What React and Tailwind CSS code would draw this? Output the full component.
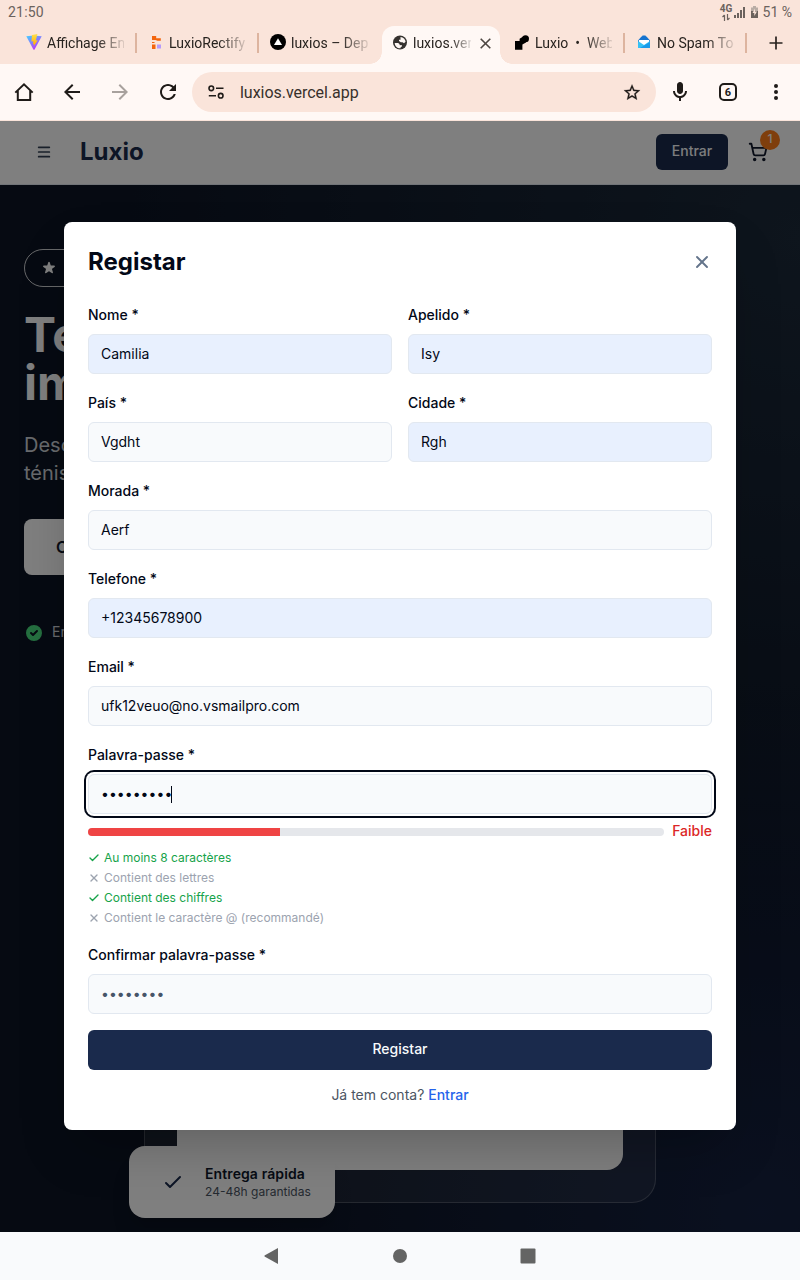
import { Check, Menu, ShoppingCart, X } from "lucide-react";

function ViteIcon() {
  return (
    <svg className="h-4 w-4" viewBox="0 0 16 16">
      <defs>
        <linearGradient id="viteA" x1="0" y1="0" x2="0.6" y2="1">
          <stop offset="0" stopColor="#41d1ff" />
          <stop offset="1" stopColor="#bd34fe" />
        </linearGradient>
        <linearGradient id="viteB" x1="0" y1="0" x2="0" y2="1">
          <stop offset="0" stopColor="#ffe04a" />
          <stop offset="1" stopColor="#ffa800" />
        </linearGradient>
      </defs>
      <path d="M0.3 2.2 L7.8 1.600 L15.7 2.2 L8.6 15.4 Q8 16.2 7.4 15.4Z" fill="url(#viteA)" />
      <path d="M11.4 0 L6 1.1 L5.4 7.6 L7.4 7.2 L6.9 10.2 L8.2 9.9 L7.6 12.6 L11.8 6.2 L9.8 6.5Z" fill="url(#viteB)" />
    </svg>
  );
}

function BlocksIcon() {
  return (
    <svg className="h-4 w-4" viewBox="0 0 16 16">
      <path d="M4 2h4.200v2.200h4.600v2.600H9.500L7.500 6H4z" fill="#f3650d" />
      <path d="M4 10.500h3.500V15H4zM4 8h2.500v1H4z" fill="#f3650d" />
      <path d="M9 10.500h4V14.500H9z" fill="#b59bfb" />
    </svg>
  );
}

function VercelIcon() {
  return (
    <svg className="h-4 w-4" viewBox="0 0 16 16">
      <circle cx="8" cy="8" r="8" fill="#000" />
      <path d="M8 4.300 12 11H4z" fill="#fff" />
    </svg>
  );
}

function GlobeIcon() {
  return (
    <svg className="h-4 w-4" viewBox="0 0 16 16">
      <circle cx="8" cy="8.500" r="7" fill="#35322f" />
      <path d="M2.700 9h3.100c1 0 2 1.100 2 2.300l2-.4v1.400c0 .8-1 1-1.300 1.300v.7C5.400 14.500 2.700 12.100 2.700 9zM8.500 3c2.800.3 4.800 2.200 5.100 4.800l-1.600 1.500-1.500-1.100H8.800L7 7V5.800h1.500z" fill="#fff8f5" />
    </svg>
  );
}

function StampIcon() {
  return (
    <svg className="h-4 w-4" viewBox="0 0 16 16">
      <circle cx="11.500" cy="4.700" r="3.500" fill="#000" />
      <path d="M1 7h4.600V4.700L10 2l2 6.500L8.400 10.500v5.200H1z" fill="#000" />
    </svg>
  );
}

function MailIcon() {
  return (
    <svg className="h-4 w-4" viewBox="0 0 16 16">
      <path d="M2 6.500 5.500 2.500h5L14 6.500V9H2z" fill="#1673cf" />
      <rect x="6" y="1.500" width="4" height="2" rx="1" fill="#1673cf" />
      <path d="M3 6h10v3.500L8 12 3 9.500z" fill="#fff" />
      <path d="M2 7l6 4 6-4v7H2z" fill="#35c1f5" />
      <path d="M14 8v6H4z" fill="#1a9bea" />
    </svg>
  );
}

function TabTitle({ children, className = "" }) {
  return (
    <span
      className={`mt-0.5 block overflow-hidden whitespace-pre text-[14px] leading-5 [mask-image:linear-gradient(to_right,black_65%,transparent_105%)] ${className}`}
    >
      {children}
    </span>
  );
}

function Tab({ icon, title, divider }) {
  return (
    <div className="flex h-full w-[122px] shrink-0 items-center pb-1 pl-3">
      {icon}
      <TabTitle className="ml-[5px] w-[77px]">{title}</TabTitle>
      {divider && <span className="-mr-px ml-auto mt-0.5 h-5 w-[2px] bg-[#ddb49f]" />}
    </div>
  );
}

function StatusBar() {
  return (
    <div className="flex h-6 items-center justify-between pl-2 pr-2 text-[14px] text-[#6b625d]">
      <span className="tracking-[0.2px]">21:50</span>
      <div className="flex items-center">
        <div className="flex w-[13px] flex-col items-center">
          <span className="text-[10px] font-bold leading-[10px]">4G</span>
          <svg className="h-[7px] w-[8px]" viewBox="0 0 8 7" fill="none" stroke="#6b625d" strokeWidth="1.200">
            <path d="M2.500 7V1M0.500 3 2.500 1M5.500 0v6M7.500 4 5.500 6" />
          </svg>
        </div>
        <svg className="ml-px h-[11px] w-[11px]" viewBox="0 0 11 11" fill="#6b625d">
          <path d="M0 8h2v3H0zM3 6h2v5H3zM6 3h2v8H6zM9 0h2v11H9z" />
        </svg>
        <svg className="ml-[6px] h-3 w-[7px]" viewBox="0 0 7 12">
          <path d="M2 0h3v1.500h2V12H0V1.500h2z" fill="#b8aca5" />
          <path d="M0 5h7v7H0z" fill="#6b625d" />
          <path d="M4 2.500 1.500 7H3.300v3L6 5.500H4z" fill="#fae4da" />
        </svg>
        <span className="ml-[5px]">51 %</span>
      </div>
    </div>
  );
}

function TabStrip() {
  return (
    <div className="flex h-10 items-center pl-[14px] text-[#28231f]">
      <Tab icon={<ViteIcon />} title="Affichage Enre" divider />
      <Tab icon={<BlocksIcon />} title="LuxioRectifyi" divider />
      <Tab icon={<VercelIcon />} title="luxios – Deploy" />
      <div className="flex h-full w-[122px] shrink-0 items-end">
        <div className="relative mx-[2px] flex h-[38px] w-[118px] items-center rounded-t-[12px] bg-[#fff8f5] pb-[6px] pl-[10px] pr-[9px]">
          <span className="absolute -left-3 bottom-0 h-3 w-3 bg-[radial-gradient(circle_at_0_0,transparent_11.5px,#fff8f5_12px)]" />
          <span className="absolute -right-3 bottom-0 h-3 w-3 bg-[radial-gradient(circle_at_100%_0,transparent_11.5px,#fff8f5_12px)]" />
          <GlobeIcon />
          <TabTitle className="ml-[5px] w-[58px]">luxios.verce</TabTitle>
          <svg className="ml-auto mt-0.5 h-[11px] w-[11px]" viewBox="0 0 11 11" stroke="#4d4641" strokeWidth="1.600">
            <path d="M0.700 0.700 10.300 10.300M10.300 0.700 0.700 10.300" />
          </svg>
        </div>
      </div>
      <Tab icon={<StampIcon />} title="Luxio  •  Web" divider />
      <Tab icon={<MailIcon />} title="No Spam Tod" divider />
      <svg className="-mt-0.5 ml-[23px] h-[14px] w-[14px]" viewBox="0 0 14 14" stroke="#28231f" strokeWidth="1.700">
        <path d="M7 0.500v13M0.500 7h13" />
      </svg>
    </div>
  );
}

function Toolbar() {
  return (
    <div className="flex h-14 items-center bg-[#fff8f5] text-[#1f1b18]">
      <svg className="ml-3 h-6 w-6" viewBox="0 0 24 24" fill="none" stroke="currentColor" strokeWidth="2">
        <path d="M3.300 12.600 12 4.300l8.700 8.300M5.800 10.500V20h12.400v-9.500" />
      </svg>
      <svg className="ml-6 h-6 w-6" viewBox="0 0 24 24" fill="currentColor">
        <path d="M20 11H7.830l5.590-5.590L12 4l-8 8 8 8 1.410-1.410L7.830 13H20v-2z" />
      </svg>
      <svg className="ml-6 h-6 w-6 text-[#a8a19d]" viewBox="0 0 24 24" fill="currentColor">
        <path d="M12 4l-1.410 1.410L16.170 11H4v2h12.170l-5.580 5.590L12 20l8-8z" />
      </svg>
      <svg className="ml-6 h-6 w-6" viewBox="0 0 24 24" fill="currentColor">
        <path d="M17.650 6.350C16.200 4.900 14.210 4 12 4c-4.420 0-7.990 3.580-7.990 8s3.570 8 7.990 8c3.730 0 6.840-2.550 7.730-6h-2.080c-.82 2.330-3.040 4-5.650 4-3.310 0-6-2.690-6-6s2.690-6 6-6c1.660 0 3.140.69 4.220 1.780L13 11h7V4l-2.350 2.350z" />
      </svg>
      <div className="ml-3 flex h-10 w-[464px] items-center rounded-full bg-[#fae4da] pl-4 pr-3">
        <svg className="h-4 w-4" viewBox="0 0 16 16" fill="none" stroke="currentColor" strokeWidth="1.600">
          <circle cx="3.300" cy="4.300" r="2.300" />
          <circle cx="12.700" cy="11.700" r="2.300" />
          <path d="M8 4.300h7.500M0.800 11.700H8" />
        </svg>
        <span className="ml-4 flex-1 pt-0.5 text-[16px] leading-6 tracking-[-0.03px] text-[#37302b]">luxios.vercel.app</span>
        <svg className="h-6 w-6" viewBox="0 0 24 24" fill="currentColor">
          <g transform="translate(2.300 2.800) scale(.81)">
            <path d="M22 9.240l-7.190-.62L12 2 9.190 8.630 2 9.240l5.460 4.730L5.820 21 12 17.270 18.180 21l-1.630-7.030L22 9.240zM12 15.400l-3.760 2.270 1-4.280-3.320-2.880 4.380-.38L12 6.100l1.710 4.040 4.380.38-3.320 2.880 1 4.280L12 15.400z" stroke="currentColor" strokeWidth=".3" />
          </g>
        </svg>
      </div>
      <svg className="ml-3 h-6 w-6" viewBox="0 0 24 24" fill="currentColor">
        <path d="M12 14c1.660 0 3-1.340 3-3V5c0-1.660-1.340-3-3-3S9 3.340 9 5v6c0 1.660 1.340 3 3 3zm5-3c0 2.760-2.240 5-5 5s-5-2.240-5-5H5c0 3.530 2.610 6.430 6 6.920V21h2v-3.080c3.390-.49 6-3.390 6-6.920h-2z" />
      </svg>
      <div className="ml-[27px] flex h-[18px] w-[18px] items-center justify-center rounded-[5px] border-2 border-current text-[11px] font-bold leading-none">
        6
      </div>
      <svg className="ml-[27px] h-6 w-6" viewBox="0 0 24 24" fill="currentColor">
        <circle cx="12" cy="6" r="2" />
        <circle cx="12" cy="12" r="2" />
        <circle cx="12" cy="18" r="2" />
      </svg>
    </div>
  );
}

function SiteHeader() {
  return (
    <div className="flex h-16 items-center border-b border-slate-200 bg-white pb-[2px] pl-9 pr-8">
      <Menu className="h-4 w-4 text-[#334155]" strokeWidth={2.6} />
      <span className="ml-7 text-2xl font-bold text-[#1a2a4c]">Luxio</span>
      <div className="ml-auto flex h-9 w-[72px] items-center justify-center rounded-md bg-[#1a2a4c] pb-0.5 text-sm font-medium text-slate-50">
        Entrar
      </div>
      <div className="relative ml-5 text-[#0f172a]">
        <ShoppingCart className="h-5 w-5" strokeWidth={2.2} />
        <span className="absolute -right-3 -top-3 flex h-5 w-5 items-center justify-center rounded-full bg-[#ff7d18] pb-px text-xs font-medium text-white">
          1
        </span>
      </div>
    </div>
  );
}

function Hero() {
  return (
    <div className="flex-1 bg-[#0c1424] bg-[radial-gradient(circle_at_100%_5%,#1c2a3a_0%,transparent_55%),radial-gradient(circle_at_95%_98%,#152140_0%,transparent_40%)] px-6 pt-16 text-white">
      <div className="flex h-[38px] w-56 items-center rounded-full border border-white/80 pl-4">
        <svg className="h-4 w-4" viewBox="0 0 20 20" fill="currentColor">
          <path d="M9.049 2.927c.3-.921 1.603-.921 1.902 0l1.070 3.292a1 1 0 00.95.69h3.462c.969 0 1.371 1.240.588 1.810l-2.800 2.034a1 1 0 00-.364 1.118l1.070 3.292c.3.921-.755 1.688-1.540 1.118l-2.800-2.034a1 1 0 00-1.175 0l-2.800 2.034c-.784.57-1.838-.197-1.539-1.118l1.070-3.292a1 1 0 00-.364-1.118L2.980 8.720c-.783-.57-.38-1.810.588-1.810h3.461a1 1 0 00.951-.69l1.070-3.292z" />
        </svg>
      </div>
      <div className="mt-6 text-5xl font-bold leading-[48px]">
        Te
        <br />
        im
      </div>
      <div className="mt-6 text-xl text-[#d1d5db]">
        Desc
        <br />
        ténis
      </div>
      <div className="mt-8 flex h-14 w-52 items-center rounded-lg bg-white pl-8 text-base font-semibold text-[#0f172a]">
        C
      </div>
      <div className="mt-12 flex h-5 items-center gap-2 text-sm text-[#d1d5db]">
        <svg className="h-5 w-5 text-[#4ade80]" viewBox="0 0 20 20" fill="currentColor">
          <path
            fillRule="evenodd"
            d="M10 18a8 8 0 100-16 8 8 0 000 16zm3.707-9.293a1 1 0 00-1.414-1.414L9 10.586 7.707 9.293a1 1 0 00-1.414 1.414l2 2a1 1 0 001.414 0l4-4z"
          />
        </svg>
        <span className="-mt-0.5">En</span>
      </div>
      <div className="relative mx-auto mt-12 h-[512px] w-[512px] rounded-3xl border border-white/20 bg-white/[0.07] p-8">
        <div className="h-full rounded-2xl bg-white" />
        <div className="absolute -bottom-4 -left-4 flex h-[72px] w-[206px] items-center rounded-2xl bg-white pl-6 shadow-xl">
          <div className="flex h-10 w-10 items-center justify-center">
            <svg className="h-6 w-6" viewBox="0 0 24 24" fill="none" stroke="#1a2a4c" strokeWidth="2" strokeLinecap="round" strokeLinejoin="round">
              <path d="M5 13l4 4L19 7" />
            </svg>
          </div>
          <div className="-mt-px ml-3 whitespace-nowrap">
            <div className="text-sm font-semibold tracking-[0.1px] text-[#0f172a]">Entrega rápida</div>
            <div className="text-xs text-[#4b5563]">24-48h garantidas</div>
          </div>
        </div>
      </div>
    </div>
  );
}

function Field({ label, value, filled, children }) {
  return (
    <div>
      <div className="h-6 pt-[3px] text-sm font-medium">{label}</div>
      {children || (
        <div
          className={`mt-2 flex h-10 items-center rounded-md border border-[#e2e8f0] px-3 text-sm ${filled ? "bg-[#e8f0fe]" : "bg-[#f8fafc]"}`}
        >
          {value}
        </div>
      )}
    </div>
  );
}

function Rule({ ok, children }) {
  const Icon = ok ? Check : X;
  return (
    <div className={`flex items-center gap-1 text-xs ${ok ? "text-[#16a34a]" : "text-[#9ca3af]"}`}>
      <Icon className="h-3 w-3" strokeWidth={2.7} />
      {children}
    </div>
  );
}

function RegisterDialog() {
  return (
    <div className="absolute left-16 top-[101px] h-[908px] w-[672px] rounded-lg bg-white p-6 text-[#020817] shadow-[0_25px_50px_-12px_rgba(0,0,0,0.25)]">
      <div className="flex h-8 items-center justify-between">
        <h2 className="text-2xl font-bold">Registar</h2>
        <X className="h-5 w-5 text-[#64748b]" strokeWidth={2.3} />
      </div>
      <div className="mt-6 flex flex-col gap-4">
        <div className="grid grid-cols-2 gap-4">
          <Field label="Nome *" value="Camilia" filled />
          <Field label="Apelido *" value="Isy" filled />
          <Field label="País *" value="Vgdht" />
          <Field label="Cidade *" value="Rgh" filled />
        </div>
        <Field label="Morada *" value="Aerf" />
        <Field label="Telefone *" value="+12345678900" filled />
        <Field label="Email *" value="ufk12veuo@no.vsmailpro.com" />
        <Field label="Palavra-passe *">
          <div className="mt-2 flex h-10 items-center rounded-md border border-[#e2e8f0] bg-[#f8fafc] px-3 text-sm ring-2 ring-[#020817] ring-offset-2">
            <span className="tracking-[0.05px]">•••••••••</span>
            <span className="-ml-px h-[17px] w-px bg-[#020817]" />
          </div>
          <div className="mt-2 flex h-5 items-center gap-2">
            <div className="h-2 flex-1 overflow-hidden rounded-full bg-[#e5e7eb]">
              <div className="h-full w-1/3 bg-[#ef4444]" />
            </div>
            <span className="pb-0.5 text-sm font-medium text-[#dc2626]">Faible</span>
          </div>
          <div className="mt-2 flex flex-col gap-1">
            <Rule ok>Au moins 8 caractères</Rule>
            <Rule>Contient des lettres</Rule>
            <Rule ok>Contient des chiffres</Rule>
            <Rule>Contient le caractère @ (recommandé)</Rule>
          </div>
        </Field>
        <Field label="Confirmar palavra-passe *" value={<span className="tracking-[0.05px] text-[#475569]">••••••••</span>} />
        <div className="flex h-10 items-center justify-center rounded-md bg-[#1a2a4c] pb-0.5 text-sm font-medium text-[#f8fafc]">
          Registar
        </div>
        <div className="-mt-px text-center text-sm text-[#4b5563]">
          Já tem conta? <span className="font-medium text-[#2563eb]">Entrar</span>
        </div>
      </div>
    </div>
  );
}

function NavBar() {
  return (
    <div className="flex h-12 items-center justify-center gap-28 bg-[#f9fafc]">
      <svg className="h-4 w-4" viewBox="0 0 16 16" fill="#646464">
        <path d="M0.500 7.500 14 0v16L0.500 8.500z" />
      </svg>
      <svg className="h-4 w-4" viewBox="0 0 16 16" fill="#646464">
        <circle cx="8" cy="8" r="7" />
      </svg>
      <svg className="h-4 w-4" viewBox="0 0 16 16" fill="#646464">
        <rect x="0.500" y="0.500" width="15" height="15" rx="1" />
      </svg>
    </div>
  );
}

export default function App() {
  return (
    <div className="flex h-[1280px] w-[800px] flex-col overflow-hidden bg-[#fae4da]">
      <div className="font-[Roboto,sans-serif]">
        <StatusBar />
        <TabStrip />
        <Toolbar />
      </div>
      <div className="relative flex h-[1112px] flex-col overflow-hidden border-t border-[#fae4da] font-[Inter,sans-serif]">
        <SiteHeader />
        <Hero />
        <div className="absolute inset-0 bg-black/50" />
        <RegisterDialog />
      </div>
      <NavBar />
    </div>
  );
}
